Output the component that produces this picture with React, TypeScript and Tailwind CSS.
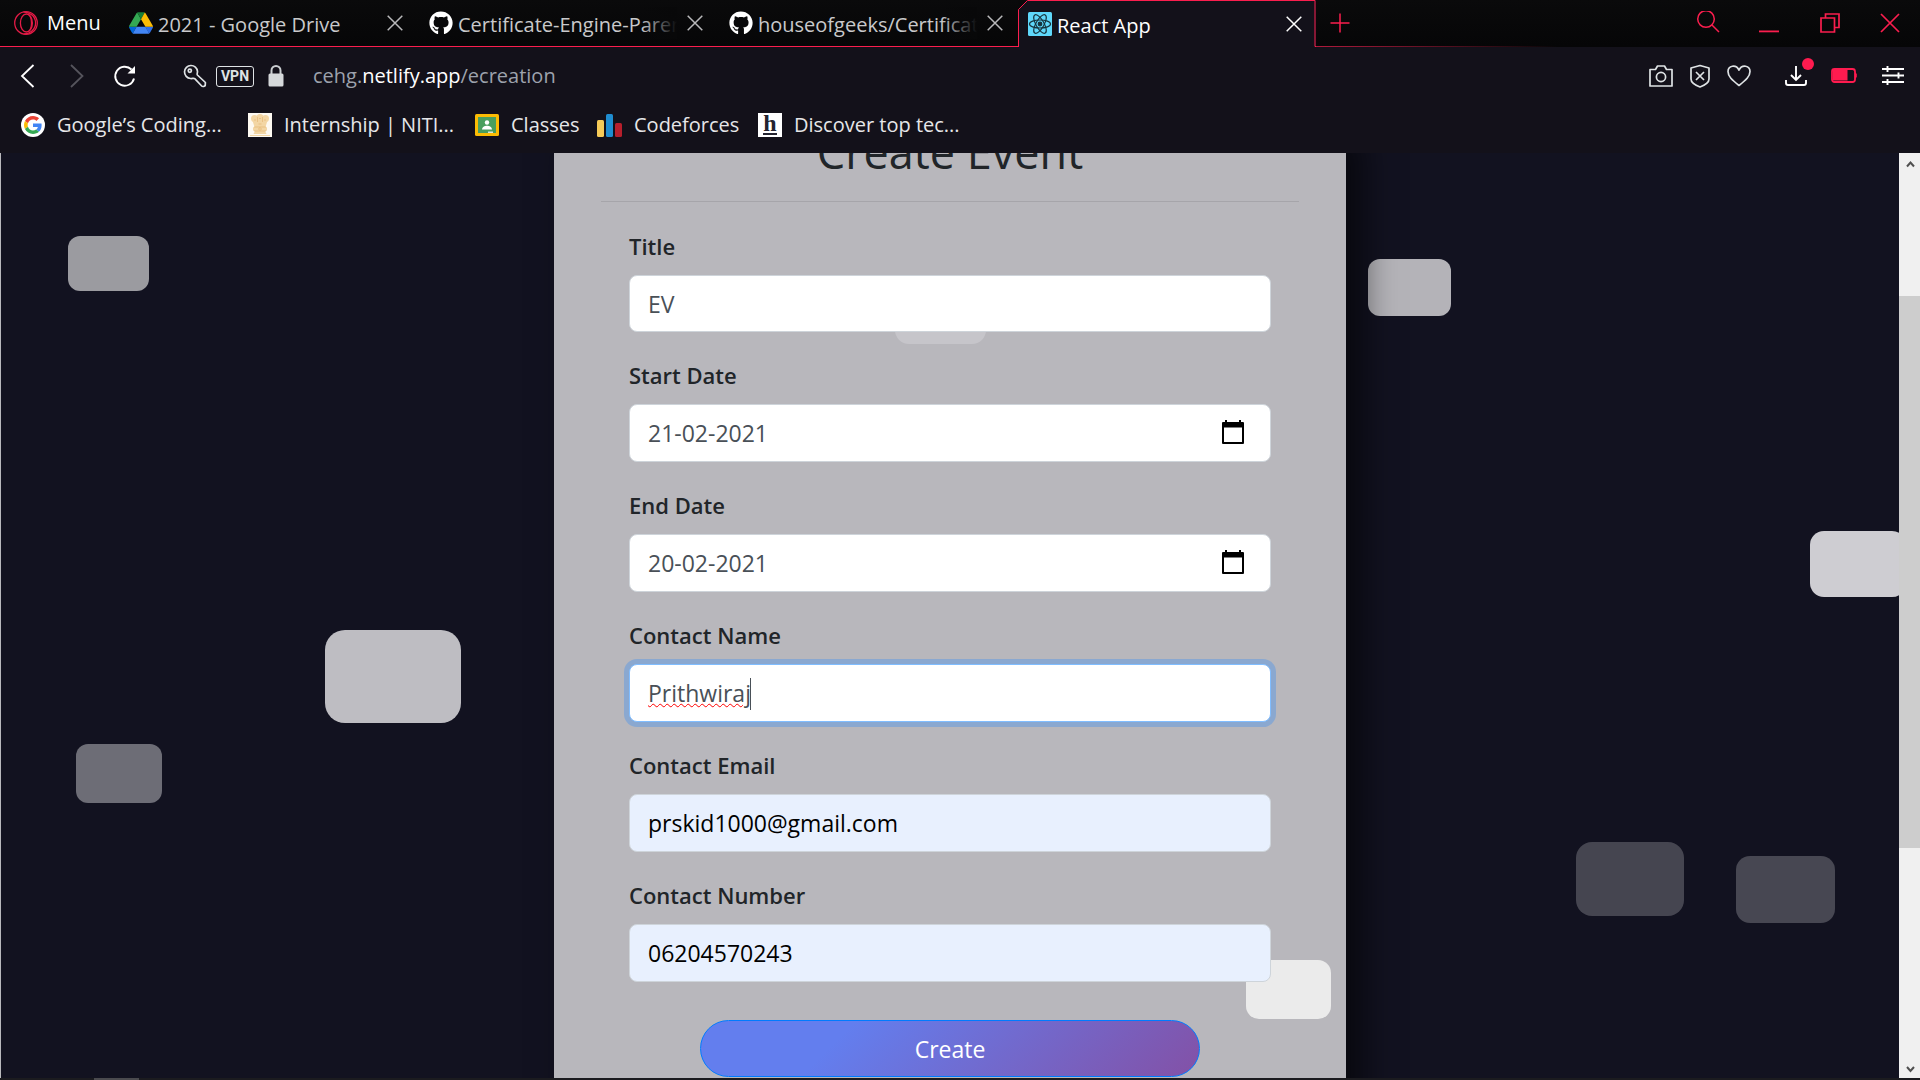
import type { ReactNode } from "react";
import { FaGithub } from "react-icons/fa";

const red = "#fa1e4e";

function OperaIcon() {
  return (
    <svg className="size-6" viewBox="0 0 24 24" fill="none" stroke="#e31b46" strokeWidth="1.3">
      <circle cx="12" cy="12" r="11.3" />
      <ellipse cx="12.4" cy="12" rx="6" ry="9" />
      <path d="M9.5 1.2C15 .8 21.600 5 21.600 12S15 23.200 9.500 22.800" />
      <path d="M14.500 3.500c4 3 4 14 0 17" />
    </svg>
  );
}

function DriveIcon() {
  return (
    <svg className="size-6 shrink-0" viewBox="0 0 87.3 78">
      <path d="m6.600 66.850 3.850 6.650c.8 1.400 1.950 2.500 3.300 3.300l13.750-23.800h-27.500c0 1.550.4 3.100 1.200 4.500z" fill="#0066da" />
      <path d="m43.650 25-13.750-23.800c-1.350.8-2.500 1.900-3.300 3.300l-25.400 44a9.060 9.060 0 0 0 -1.200 4.500h27.500z" fill="#34a853" />
      <path d="m73.550 76.800c1.350-.8 2.500-1.900 3.300-3.300l1.600-2.750 7.650-13.250c.8-1.400 1.200-2.950 1.200-4.500h-27.500l5.850 11.500z" fill="#2e6fe8" />
      <path d="m43.650 25 13.750-23.800c-1.350-.8-2.900-1.200-4.500-1.200h-18.500c-1.600 0-3.150.45-4.500 1.200z" fill="#188038" />
      <path d="m59.800 53h-32.300l-13.750 23.800c1.350.8 2.900 1.200 4.500 1.200h50.800c1.600 0 3.150-.45 4.500-1.200z" fill="#4285f4" />
      <path d="m73.400 26.500-12.700-22c-.8-1.400-1.950-2.500-3.300-3.300l-13.750 23.800 16.150 28h27.450c0-1.550-.4-3.100-1.200-4.500z" fill="#fbbc04" />
    </svg>
  );
}

function ReactIcon() {
  return (
    <svg className="size-6 shrink-0" viewBox="0 0 24 24" fill="none" stroke="#16323c" strokeWidth="1.200">
      <rect width="24" height="24" rx="1.500" fill="#5fd8fb" stroke="none" />
      <ellipse cx="12" cy="12" rx="10.500" ry="4" />
      <ellipse cx="12" cy="12" rx="10.500" ry="4" transform="rotate(60 12 12)" />
      <ellipse cx="12" cy="12" rx="10.500" ry="4" transform="rotate(120 12 12)" />
      <circle cx="12" cy="12" r="1.800" fill="#16323c" />
    </svg>
  );
}

function GoogleIcon() {
  return (
    <svg className="size-6" viewBox="0 0 24 24">
      <circle cx="12" cy="12" r="12" fill="#fff" />
      <g transform="translate(3 3) scale(.375)">
        <path fill="#EA4335" d="M24 9.500c3.540 0 6.710 1.220 9.210 3.600l6.850-6.850C35.900 2.380 30.470 0 24 0 14.620 0 6.510 5.380 2.560 13.220l7.980 6.190C12.430 13.720 17.740 9.500 24 9.500z" />
        <path fill="#4285F4" d="M46.980 24.550c0-1.570-.15-3.090-.38-4.550H24v9.020h12.940c-.58 2.960-2.260 5.480-4.780 7.180l7.730 6c4.510-4.180 7.090-10.360 7.090-17.650z" />
        <path fill="#FBBC05" d="M10.530 28.590c-.48-1.450-.76-2.990-.76-4.590s.27-3.140.76-4.590l-7.980-6.190C.92 16.460 0 20.120 0 24c0 3.880.92 7.540 2.560 10.780l7.970-6.190z" />
        <path fill="#34A853" d="M24 48c6.480 0 11.930-2.130 15.890-5.810l-7.730-6c-2.150 1.450-4.920 2.300-8.160 2.300-6.260 0-11.570-4.220-13.470-9.910l-7.980 6.190C6.510 42.620 14.620 48 24 48z" />
      </g>
    </svg>
  );
}

function EmblemIcon() {
  return (
    <svg className="size-6" viewBox="0 0 24 24">
      <rect width="24" height="24" fill="#fdf9f1" />
      <g fill="#f3d6a4">
        <circle cx="12" cy="4.500" r="3.600" />
        <circle cx="6.500" cy="5.500" r="3.500" />
        <circle cx="17.500" cy="5.500" r="3.500" />
        <path d="M4 6h16l-2.500 8h-11z" />
        <rect x="5" y="14" width="14" height="4" rx="1" />
        <path d="M7 18h10l1.500 3h-13z" />
        <rect x="2" y="22" width="20" height="1" />
      </g>
      <g stroke="#e4b877" fill="none" strokeWidth=".7">
        <path d="M9.500 4v5M14.500 4v5M6 7h2M16 7h2M11 5.500h2M10.500 11h3M6 14h12M6 18h12" />
        <circle cx="12" cy="16" r="1.300" />
      </g>
    </svg>
  );
}

function ClassroomIcon() {
  return (
    <svg className="size-6" viewBox="0 0 24 24">
      <rect y="1" width="24" height="22" rx="1.500" fill="#fbbc04" />
      <rect x="3" y="4" width="18" height="16" fill="#4a9f5e" />
      <circle cx="12" cy="9.500" r="2.200" fill="#fff" />
      <path d="M7 16.500c0-2.500 2.500-3.800 5-3.800s5 1.300 5 3.800z" fill="#fff" />
      <rect x="13" y="18.500" width="5" height="1.500" fill="#d9e8dc" />
    </svg>
  );
}

function CodeforcesIcon() {
  return (
    <svg className="h-6 w-[25px]" viewBox="0 0 25 24">
      <rect y="7" width="7" height="17" rx="1.500" fill="#f6cb58" />
      <rect x="9" y="1" width="7" height="23" rx="1.500" fill="#1f8dd0" />
      <rect x="18" y="10" width="7" height="14" rx="1.500" fill="#b71f2c" />
    </svg>
  );
}

function HackerEarthIcon() {
  return (
    <span className="flex size-6 flex-col items-center bg-white text-[#23232f]">
      <span className="h-5 font-['Liberation_Serif',serif] text-2xl leading-5 font-bold">h</span>
      <span className="h-0.5 w-3.5 bg-[#23232f]" />
    </span>
  );
}

function CloseIcon({ color }: { color: string }) {
  return (
    <svg className="size-4" viewBox="0 0 16 16" stroke={color} strokeWidth="1.500">
      <path d="M.7.7l14.600 14.600M15.300.7L.7 15.300" />
    </svg>
  );
}

function Tab({ icon, title, fade }: { icon: ReactNode; title: string; fade?: boolean }) {
  return (
    <div className="flex h-full w-[300px] items-center border-b border-[#fa1e4e] pr-[15px] pl-[11px]">
      {icon}
      <span className="relative ml-[5px] h-8 flex-1 overflow-hidden pt-1 text-xl leading-7 whitespace-nowrap text-[#c9c9cb]">
        {title}
        {fade && <span className="absolute inset-y-0 right-0 w-9 bg-linear-to-r from-transparent to-[#080809]" />}
      </span>
      <button aria-label={`Close ${title}`} className="ml-2.5">
        <CloseIcon color="#b9b9bb" />
      </button>
    </div>
  );
}

function TabStrip() {
  return (
    <header className="flex h-[47px] bg-linear-to-b from-[#0a0a0b] to-[#060607]">
      <button className="flex w-[118px] items-center gap-[9px] border-b border-[#fa1e4e] pl-3.5 text-xl text-white">
        <OperaIcon />
        Menu
      </button>
      <Tab icon={<DriveIcon />} title="2021 - Google Drive" />
      <Tab icon={<FaGithub className="size-6 shrink-0 text-white" />} title="Certificate-Engine-Parent" fade />
      <Tab icon={<FaGithub className="size-6 shrink-0 text-white" />} title="houseofgeeks/Certificate" fade />
      <div className="relative flex h-full w-[298px] items-center bg-[#13111a] pr-3.5 pl-2.5">
        <svg className="absolute inset-0 h-[47px] w-[298px]" viewBox="0 0 298 47" fill="none" stroke={red}>
          <path d="M0 0h9L0 10z" fill="#09090a" stroke="none" />
          <path d="M.5 47V9.500L9.500.5h287.500V46.500h1" />
        </svg>
        <ReactIcon />
        <span className="ml-[5px] h-8 flex-1 pt-1 text-xl leading-7 text-white">React App</span>
        <button aria-label="Close React App">
          <CloseIcon color="#ffffff" />
        </button>
      </div>
      <div className="flex flex-1 items-center border-b border-transparent bg-linear-to-r from-[#b01a3c] to-transparent to-40% bg-[length:100%_1px] bg-bottom bg-no-repeat bg-origin-border">
        <button aria-label="New tab" className="ml-3.5">
          <svg className="size-5" viewBox="0 0 20 20" stroke={red} strokeWidth="1.500">
            <path d="M10 .5v19M.5 10h19" />
          </svg>
        </button>
        <div className="mr-5 ml-auto flex items-center">
          <button aria-label="Search tabs" className="mr-[39px]">
            <svg className="size-6" viewBox="0 0 24 24" fill="none" stroke={red} strokeWidth="1.500">
              <circle cx="10" cy="8" r="8.300" />
              <path d="M16 14l7 7" />
            </svg>
          </button>
          <button aria-label="Minimize" className="mr-[41px]">
            <svg className="size-5" viewBox="0 0 20 20">
              <rect y="17.500" width="20" height="1.800" fill={red} />
            </svg>
          </button>
          <button aria-label="Restore" className="mr-10">
            <svg className="size-5" viewBox="0 0 20 20" fill="none" stroke={red} strokeWidth="1.700">
              <path d="M1 5h13.500v14H1zM5.500 5V1H19v13.500h-4.500" />
            </svg>
          </button>
          <button aria-label="Close window">
            <svg className="size-5" viewBox="0 0 20 20" stroke={red} strokeWidth="1.700">
              <path d="M1 1l18 18M19 1L1 19" />
            </svg>
          </button>
        </div>
      </div>
    </header>
  );
}

function Toolbar() {
  return (
    <div className="flex h-[58px] items-center pr-[15px] pl-5 text-[#dfe3e5]">
      <button aria-label="Back">
        <svg className="h-6 w-4" viewBox="0 0 16 24" fill="none" stroke="#fff" strokeWidth="1.800">
          <path d="M13.500 1L2 12l11.500 11" />
        </svg>
      </button>
      <button aria-label="Forward" className="ml-8">
        <svg className="h-6 w-4" viewBox="0 0 16 24" fill="none" stroke="#55545c" strokeWidth="1.800">
          <path d="M3 1l11.500 11L3 23" />
        </svg>
      </button>
      <button aria-label="Reload" className="ml-[29px]">
        <svg className="size-6" viewBox="0 0 24 24" fill="none" stroke="#fff" strokeWidth="1.900">
          <path d="M21 14.500A9.500 9.500 0 1 1 18.500 5.500" />
          <path d="M22 2v7.500h-7.500z" fill="#fff" stroke="none" />
        </svg>
      </button>
      <button aria-label="Saved passwords" className="ml-[46px]">
        <svg className="size-6" viewBox="0 0 24 24" fill="none" stroke="currentColor" strokeWidth="1.700" strokeLinejoin="round">
          <path d="M14.500 7.500a6.500 6.500 0 1 0-7 7c2.200.2 3.200-.6 4.200.2l7 7.300c.8.900 3.300.5 3.500-.5l.2-3-8-7.500c-.8-.9.2-2 .1-3.500z" />
          <circle cx="6.800" cy="6.800" r="1.600" />
        </svg>
      </button>
      <button className="ml-[9px] flex h-[21px] w-[38px] items-center justify-center rounded-[3px] border border-[#dfe3e5] font-['Roboto',sans-serif] text-sm font-bold">
        VPN
      </button>
      <svg className="ml-3.5 h-6 w-4" viewBox="0 0 16 24" fill="none">
        <path d="M3.500 10V6.500a4.500 4.500 0 0 1 9 0V10" stroke="#c9cdd0" strokeWidth="2" />
        <rect x=".5" y="9.500" width="15" height="13" rx="1.500" fill="#d5d8da" />
      </svg>
      <p className="ml-[29px] text-xl leading-7 text-[#9da2ad]">
        cehg.<span className="text-white">netlify.app</span>/ecreation
      </p>
      <div className="ml-auto flex items-center">
        <button aria-label="Snapshot">
          <svg className="size-6" viewBox="0 0 24 24" fill="none" stroke="currentColor" strokeWidth="1.700" strokeLinejoin="round">
            <path d="M1 5.500h5.500L8.500 2h7l2 3.500H23V22H1z" />
            <circle cx="12" cy="13" r="4.600" />
          </svg>
        </button>
        <button aria-label="Content blocker" className="ml-[15px]">
          <svg className="size-6" viewBox="0 0 24 24" fill="none" stroke="currentColor" strokeWidth="1.700" strokeLinejoin="round">
            <path d="M12 1.500L21 4v11c0 4-5 6.500-9 8-4-1.500-9-4-9-8V4z" />
            <path d="M8 8l8 8M16 8l-8 8" />
          </svg>
        </button>
        <button aria-label="Bookmark" className="ml-[15px]">
          <svg className="size-6" viewBox="0 0 24 24" fill="none" stroke="currentColor" strokeWidth="1.700" strokeLinejoin="round">
            <path d="M12 21.500C5 16 1 12.500 1 7.500 1 1.500 9 0 12 6c3-6 11-4.500 11 1.500 0 5-4 8.500-11 14z" />
          </svg>
        </button>
        <button aria-label="Downloads" className="relative ml-[33px]">
          <svg className="size-6" viewBox="0 0 24 24" fill="none" stroke="#fff" strokeWidth="1.900">
            <path d="M12 2v14M7 11l5 5 5-5M2 16v3c0 1.500.8 2 2 2h16c1.200 0 2-.5 2-2v-3" />
          </svg>
          <span className="absolute -top-1.5 -right-1.5 size-3 rounded-full bg-[#ff1b4f]" />
        </button>
        <button aria-label="Battery saver" className="ml-[23px]">
          <svg className="h-6 w-[26px]" viewBox="0 0 26 24">
            <rect x="1" y="5" width="23" height="13" rx="2.500" fill="none" stroke="#ff1b4f" strokeWidth="1.800" />
            <rect x="2" y="6" width="14.500" height="10.500" fill="#ff1b4f" />
            <path d="M24 8l1.800 2v3L24 15z" fill="#ff1b4f" />
          </svg>
        </button>
        <button aria-label="Easy setup" className="ml-6">
          <svg className="size-6" viewBox="0 0 24 24" stroke="#fff" strokeWidth="1.900">
            <path d="M1 5h22M1 11.500h22M1 18h22M6.500 2v6M17.500 8.500v6M6.500 15v6" />
          </svg>
        </button>
      </div>
    </div>
  );
}

function Bookmarks() {
  const link = "flex shrink-0 items-center gap-3 whitespace-nowrap";
  return (
    <nav className="flex h-12 items-center pb-2 pl-[21px] text-xl leading-7 text-[#e6e6e8]">
      <a href="#google" className={`${link} w-[227px]`}><GoogleIcon />Google’s Coding...</a>
      <a href="#niti" className={`${link} w-[227px]`}><EmblemIcon />Internship | NITI...</a>
      <a href="#classes" className={`${link} w-[122px]`}><ClassroomIcon />Classes</a>
      <a href="#codeforces" className={`${link} w-[161px]`}><CodeforcesIcon />Codeforces</a>
      <a href="#hackerearth" className={link}><HackerEarthIcon />Discover top tec...</a>
    </nav>
  );
}

function CalendarIcon() {
  return (
    <svg className="h-[26px] w-6" viewBox="0 0 24 26">
      <path d="M1 4q0-1 1-1h2V1h2v2h12V1h2v2h2q1 0 1 1v20q0 1-1 1H2q-1 0-1-1z" fill="#000" />
      <path d="M3 8.500h18V23H3z" fill="#fff" />
    </svg>
  );
}

type FieldProps = { id: string; label: string; value: string; kind?: "plain" | "date" | "focus" | "filled" };

const kinds = {
  plain: "h-[57px] border-[#ced4da] bg-white text-[#495057]",
  date: "h-[58px] border-[#ced4da] bg-white text-[#495057]",
  focus:
    "h-[58px] border-[#80bdff] bg-white text-[#495057] ring-5 ring-[#8aa8d0] underline decoration-wavy decoration-[#ff0000] decoration-1",
  filled: "h-[58px] border-[#ced4da] bg-[#e8f0fe] text-black",
};

function Field({ id, label, value, kind = "plain" }: FieldProps) {
  return (
    <div className="relative mb-6">
      <label htmlFor={id} className="mb-[11px] block pt-px text-[22px] leading-9 font-semibold text-[#212529]">
        {label}
      </label>
      <input
        id={id}
        type="text"
        defaultValue={value}
        className={`block w-full rounded-lg border px-[18px] text-[23px] outline-none ${kinds[kind]}`}
      />
      {kind === "date" && (
        <button type="button" aria-label={`Pick ${label}`} className="absolute right-[26px] bottom-[17px]">
          <CalendarIcon />
        </button>
      )}
      {kind === "focus" && <span className="absolute bottom-3 left-[121px] h-8 w-px bg-[#495057]" />}
    </div>
  );
}

function Page() {
  return (
    <main className="relative flex-1 overflow-hidden border-l border-[#b9b9bd] bg-[#121220]">
      <div className="absolute top-[83px] left-[67px] h-[55px] w-[81px] rounded-xl bg-[#9b9ba0]" />
      <div className="absolute top-[106px] left-[1367px] h-[57px] w-[83px] rounded-xl bg-[#b4b3b8]" />
      <div className="absolute top-[477px] left-[324px] h-[93px] w-[136px] rounded-[20px] bg-[#bebdc2]" />
      <div className="absolute top-[591px] left-[75px] h-[59px] w-[86px] rounded-xl bg-[#6d6d76]" />
      <div className="absolute top-[378px] left-[1809px] h-[66px] w-[96px] rounded-[14px] bg-[#cecdd2]" />
      <div className="absolute top-[689px] left-[1575px] h-[74px] w-[108px] rounded-2xl bg-[#454550]" />
      <div className="absolute top-[703px] left-[1735px] h-[67px] w-[99px] rounded-[14px] bg-[#474752]" />

      <section className="relative mx-auto -mt-[19px] h-[1020px] w-full max-w-[792px] bg-[#b8b7bc] px-[47px] shadow-[16px_0_32px_rgba(0,0,0,0.6)]">
        <div className="absolute top-[152px] left-[341px] h-[58px] w-[91px] rounded-[14px] bg-[#c6c5ca]" />
        <div className="absolute top-[826px] left-[692px] h-[59px] w-[85px] rounded-[13px] bg-[#ebebeb]" />
        <h1 className="h-[68px] border-b border-[#a6a5aa] text-center text-[45px] leading-[36px] text-[#212529]">Create Event</h1>
        <form className="relative px-7 pt-[25px]">
          <Field id="title" label="Title" value="EV" />
          <Field id="start" label="Start Date" value="21-02-2021" kind="date" />
          <Field id="end" label="End Date" value="20-02-2021" kind="date" />
          <Field id="name" label="Contact Name" value="Prithwiraj" kind="focus" />
          <Field id="email" label="Contact Email" value="prskid1000@gmail.com" kind="filled" />
          <Field id="number" label="Contact Number" value="06204570243" kind="filled" />
          <button
            type="button"
            className="mx-auto mt-[38px] block h-[57px] w-[500px] rounded-full border border-[#007bff] bg-[linear-gradient(135deg,#637eee_28%,#8351a6)] pt-0.5 text-[23px] text-white"
          >
            Create
          </button>
        </form>
      </section>
    </main>
  );
}

function Scrollbar() {
  return (
    <div className="flex w-[21px] flex-col items-center bg-[#f0f0f0]" aria-hidden="true">
      <svg className="h-[143px] w-[21px]" viewBox="0 0 21 143" fill="none" stroke="#505050" strokeWidth="2">
        <path d="M8 13.500l3.500-4 3.500 4" />
      </svg>
      <div className="w-full flex-1 bg-[#cdcdcd]" />
      <svg className="h-[230px] w-[21px]" viewBox="0 0 21 230" fill="none" stroke="#505050" strokeWidth="2">
        <path d="M8 219l3.500 4 3.500-4" />
      </svg>
    </div>
  );
}

export default function App() {
  return (
    <div className="flex h-screen flex-col overflow-hidden bg-[#13111a] font-['Open_Sans','Noto_Sans',sans-serif]">
      <TabStrip />
      <Toolbar />
      <Bookmarks />
      <div className="flex min-h-0 flex-1">
        <Page />
        <Scrollbar />
      </div>
      <footer className="h-0.5 bg-[#1b1b1f] pl-[94px]">
        <div className="h-full w-[45px] bg-[#4a4a4e]" />
      </footer>
    </div>
  );
}
